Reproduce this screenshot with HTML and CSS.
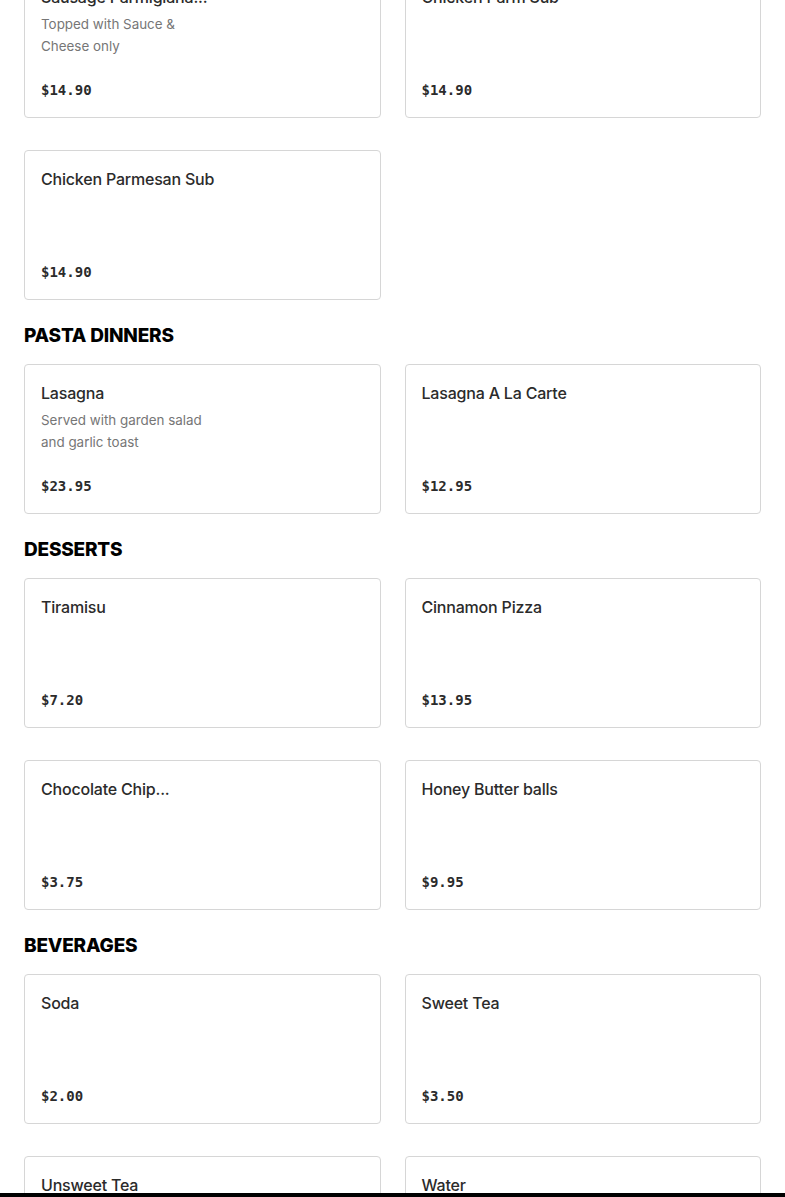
FILE: index.html
```html
<!DOCTYPE html>
<html lang="en">
<head>
<meta charset="utf-8">
<title>Menu</title>
<link rel="stylesheet" href="styles.css">
</head>
<body>
<main class="menu">
  <section class="section section-first">
    <div class="grid">
      <div class="card">
        <h3 class="title">Sausage Parmigiana...</h3>
        <p class="desc">Topped with Sauce &amp;<br>Cheese only</p>
        <div class="price">$14.90</div>
      </div>
      <div class="card">
        <h3 class="title">Chicken Parm Sub</h3>
        <div class="price">$14.90</div>
      </div>
      <div class="card">
        <h3 class="title">Chicken Parmesan Sub</h3>
        <div class="price">$14.90</div>
      </div>
    </div>
  </section>
  <section class="section">
    <h2 class="heading">PASTA DINNERS</h2>
    <div class="grid">
      <div class="card">
        <h3 class="title">Lasagna</h3>
        <p class="desc">Served with garden salad<br>and garlic toast</p>
        <div class="price">$23.95</div>
      </div>
      <div class="card">
        <h3 class="title">Lasagna A La Carte</h3>
        <div class="price">$12.95</div>
      </div>
    </div>
  </section>
  <section class="section">
    <h2 class="heading">DESSERTS</h2>
    <div class="grid">
      <div class="card">
        <h3 class="title">Tiramisu</h3>
        <div class="price">$7.20</div>
      </div>
      <div class="card">
        <h3 class="title">Cinnamon Pizza</h3>
        <div class="price">$13.95</div>
      </div>
      <div class="card">
        <h3 class="title">Chocolate Chip...</h3>
        <div class="price">$3.75</div>
      </div>
      <div class="card">
        <h3 class="title">Honey Butter balls</h3>
        <div class="price">$9.95</div>
      </div>
    </div>
  </section>
  <section class="section">
    <h2 class="heading">BEVERAGES</h2>
    <div class="grid">
      <div class="card">
        <h3 class="title">Soda</h3>
        <div class="price">$2.00</div>
      </div>
      <div class="card">
        <h3 class="title">Sweet Tea</h3>
        <div class="price">$3.50</div>
      </div>
      <div class="card">
        <h3 class="title">Unsweet Tea</h3>
        <div class="price">$2.00</div>
      </div>
      <div class="card">
        <h3 class="title">Water</h3>
        <div class="price">$1.00</div>
      </div>
    </div>
  </section>
</main>
<div class="bottom-bar"></div>
</body>
</html>
```

FILE: styles.css
```css
html, body {
  margin: 0;
  padding: 0;
  background: #ffffff;
}
body {
  font-family: Inter, "Noto Sans", "Liberation Sans", sans-serif;
  color: #2b2b2b;
  overflow: hidden;
}
.menu {
  padding: 0 24px 40px;
  margin-top: -32px;
}
.section {
  display: flex;
  flex-direction: column;
}
.heading {
  margin: 23px 0 15px;
  font-size: 19px;
  line-height: 26px;
  font-weight: 800;
  color: #000000;
  letter-spacing: -0.2px;
}
.grid {
  display: grid;
  grid-template-columns: 1fr 1fr;
  column-gap: 24px;
  row-gap: 32px;
}
.card {
  box-sizing: border-box;
  height: 150px;
  border: 1px solid #d6d6d6;
  border-radius: 4px;
  padding: 16px 16px 17px;
  display: flex;
  flex-direction: column;
  background: #ffffff;
}
.title {
  margin: 0;
  font-size: 16px;
  line-height: 24px;
  font-weight: 500;
  color: #2b2b2b;
  letter-spacing: -0.2px;
}
.desc {
  margin: 4px 0 0;
  font-size: 13.4px;
  line-height: 22px;
  color: #767676;
  font-weight: 400;
}
.price {
  margin-top: auto;
  font-family: "DejaVu Sans Mono", "Liberation Mono", monospace;
  font-size: 14px;
  line-height: 20px;
  font-weight: 700;
  color: #2b2b2b;
}
.bottom-bar {
  position: fixed;
  left: 0;
  right: 0;
  bottom: 0;
  height: 4px;
  background: #000000;
}
```
